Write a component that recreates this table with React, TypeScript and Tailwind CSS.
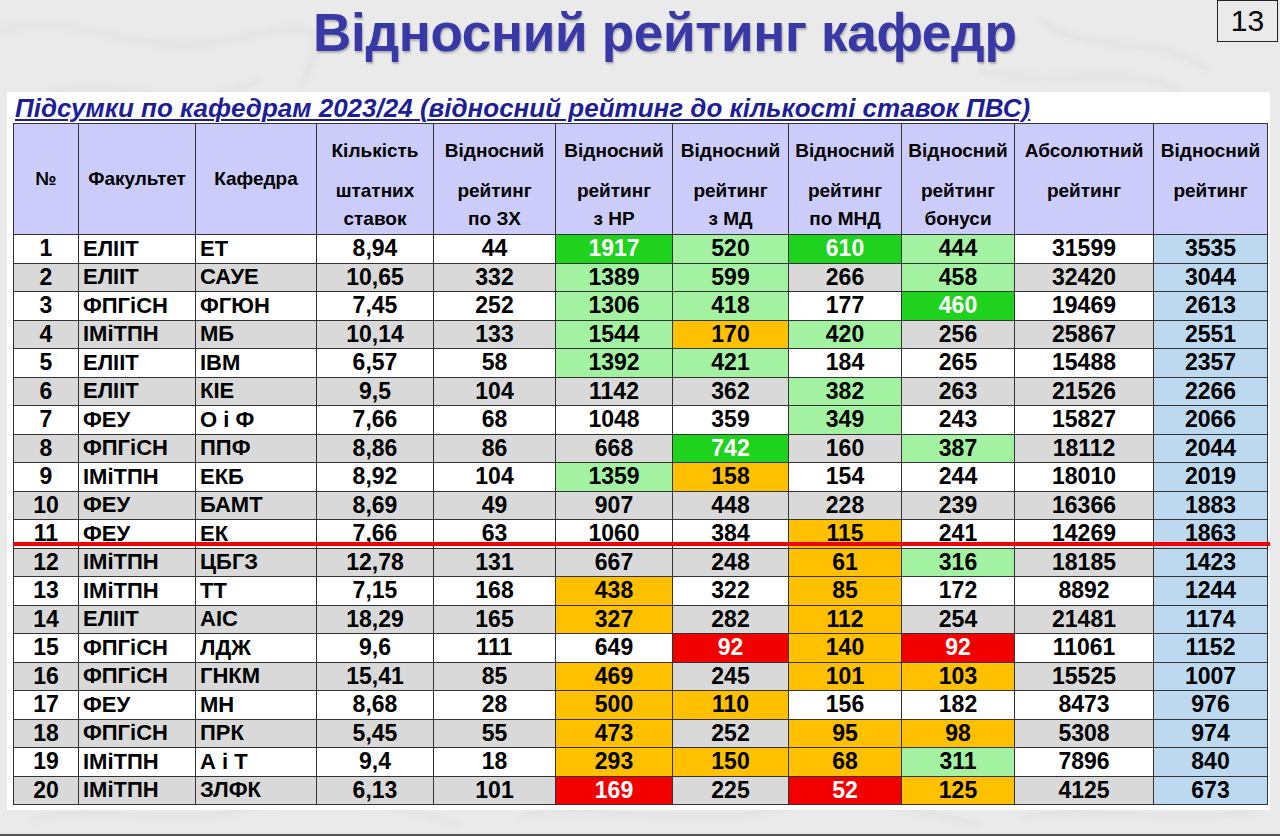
import React from 'react';

type Mark = '' | 'G' | 'g' | 'o' | 'r';

interface Row {
  n: number;
  fac: string;
  dep: string;
  staff: string;
  zh: string;
  nr: [string, Mark];
  md: [string, Mark];
  mnd: [string, Mark];
  bonus: [string, Mark];
  abs: string;
  rel: string;
}

const rows: Row[] = [
  { n: 1, fac: 'ЕЛІІТ', dep: 'ЕТ', staff: '8,94', zh: '44', nr: ['1917', 'G'], md: ['520', 'g'], mnd: ['610', 'G'], bonus: ['444', 'g'], abs: '31599', rel: '3535' },
  { n: 2, fac: 'ЕЛІІТ', dep: 'САУЕ', staff: '10,65', zh: '332', nr: ['1389', 'g'], md: ['599', 'g'], mnd: ['266', ''], bonus: ['458', 'g'], abs: '32420', rel: '3044' },
  { n: 3, fac: 'ФПГіСН', dep: 'ФГЮН', staff: '7,45', zh: '252', nr: ['1306', 'g'], md: ['418', 'g'], mnd: ['177', ''], bonus: ['460', 'G'], abs: '19469', rel: '2613' },
  { n: 4, fac: 'ІМіТПН', dep: 'МБ', staff: '10,14', zh: '133', nr: ['1544', 'g'], md: ['170', 'o'], mnd: ['420', 'g'], bonus: ['256', ''], abs: '25867', rel: '2551' },
  { n: 5, fac: 'ЕЛІІТ', dep: 'ІВМ', staff: '6,57', zh: '58', nr: ['1392', 'g'], md: ['421', 'g'], mnd: ['184', ''], bonus: ['265', ''], abs: '15488', rel: '2357' },
  { n: 6, fac: 'ЕЛІІТ', dep: 'КІЕ', staff: '9,5', zh: '104', nr: ['1142', ''], md: ['362', ''], mnd: ['382', 'g'], bonus: ['263', ''], abs: '21526', rel: '2266' },
  { n: 7, fac: 'ФЕУ', dep: 'О і Ф', staff: '7,66', zh: '68', nr: ['1048', ''], md: ['359', ''], mnd: ['349', 'g'], bonus: ['243', ''], abs: '15827', rel: '2066' },
  { n: 8, fac: 'ФПГіСН', dep: 'ППФ', staff: '8,86', zh: '86', nr: ['668', ''], md: ['742', 'G'], mnd: ['160', ''], bonus: ['387', 'g'], abs: '18112', rel: '2044' },
  { n: 9, fac: 'ІМіТПН', dep: 'ЕКБ', staff: '8,92', zh: '104', nr: ['1359', 'g'], md: ['158', 'o'], mnd: ['154', ''], bonus: ['244', ''], abs: '18010', rel: '2019' },
  { n: 10, fac: 'ФЕУ', dep: 'БАМТ', staff: '8,69', zh: '49', nr: ['907', ''], md: ['448', ''], mnd: ['228', ''], bonus: ['239', ''], abs: '16366', rel: '1883' },
  { n: 11, fac: 'ФЕУ', dep: 'ЕК', staff: '7,66', zh: '63', nr: ['1060', ''], md: ['384', ''], mnd: ['115', 'o'], bonus: ['241', ''], abs: '14269', rel: '1863' },
  { n: 12, fac: 'ІМіТПН', dep: 'ЦБГЗ', staff: '12,78', zh: '131', nr: ['667', ''], md: ['248', ''], mnd: ['61', 'o'], bonus: ['316', 'g'], abs: '18185', rel: '1423' },
  { n: 13, fac: 'ІМіТПН', dep: 'ТТ', staff: '7,15', zh: '168', nr: ['438', 'o'], md: ['322', ''], mnd: ['85', 'o'], bonus: ['172', ''], abs: '8892', rel: '1244' },
  { n: 14, fac: 'ЕЛІІТ', dep: 'АІС', staff: '18,29', zh: '165', nr: ['327', 'o'], md: ['282', ''], mnd: ['112', 'o'], bonus: ['254', ''], abs: '21481', rel: '1174' },
  { n: 15, fac: 'ФПГіСН', dep: 'ЛДЖ', staff: '9,6', zh: '111', nr: ['649', ''], md: ['92', 'r'], mnd: ['140', 'o'], bonus: ['92', 'r'], abs: '11061', rel: '1152' },
  { n: 16, fac: 'ФПГіСН', dep: 'ГНКМ', staff: '15,41', zh: '85', nr: ['469', 'o'], md: ['245', ''], mnd: ['101', 'o'], bonus: ['103', 'o'], abs: '15525', rel: '1007' },
  { n: 17, fac: 'ФЕУ', dep: 'МН', staff: '8,68', zh: '28', nr: ['500', 'o'], md: ['110', 'o'], mnd: ['156', ''], bonus: ['182', ''], abs: '8473', rel: '976' },
  { n: 18, fac: 'ФПГіСН', dep: 'ПРК', staff: '5,45', zh: '55', nr: ['473', 'o'], md: ['252', ''], mnd: ['95', 'o'], bonus: ['98', 'o'], abs: '5308', rel: '974' },
  { n: 19, fac: 'ІМіТПН', dep: 'А і Т', staff: '9,4', zh: '18', nr: ['293', 'o'], md: ['150', 'o'], mnd: ['68', 'o'], bonus: ['311', 'g'], abs: '7896', rel: '840' },
  { n: 20, fac: 'ІМіТПН', dep: 'ЗЛФК', staff: '6,13', zh: '101', nr: ['169', 'r'], md: ['225', ''], mnd: ['52', 'r'], bonus: ['125', 'o'], abs: '4125', rel: '673' },
];

const headers: string[][] = [
  ['№'],
  ['Факультет'],
  ['Кафедра'],
  ['Кількість', 'штатних', 'ставок'],
  ['Відносний', 'рейтинг', 'по ЗХ'],
  ['Відносний', 'рейтинг', 'з НР'],
  ['Відносний', 'рейтинг', 'з МД'],
  ['Відносний', 'рейтинг', 'по МНД'],
  ['Відносний', 'рейтинг', 'бонуси'],
  ['Абсолютний', 'рейтинг'],
  ['Відносний', 'рейтинг'],
];

const widths = ['w-[65px]', 'w-[117px]', 'w-[121px]', 'w-[117px]', 'w-[122px]', 'w-[117px]', 'w-[116px]', 'w-[113px]', 'w-[113px]', 'w-[139px]', 'w-[114px]'];

const markClass: Record<Exclude<Mark, ''>, string> = {
  G: 'bg-[#1ed21e] text-white',
  g: 'bg-[#a2f2a2]',
  o: 'bg-[#ffc000]',
  r: 'bg-[#f20000] text-white',
};

function HeaderCell({ lines }: { lines: string[] }) {
  if (lines.length === 1) {
    return (
      <th className="border border-[#333] bg-[#ccccfa] p-0 align-middle text-center text-[19px] font-bold">
        {lines[0]}
      </th>
    );
  }
  return (
    <th className="border border-[#333] bg-[#ccccfa] p-0 align-top text-[19px] font-bold">
      <div className="flex flex-col items-center">
        <div className="flex h-[54px] items-center">{lines[0]}</div>
        <div className="flex h-[26px] items-center">{lines[1]}</div>
        {lines[2] && <div className="flex h-[30px] items-center">{lines[2]}</div>}
      </div>
    </th>
  );
}

function Marble() {
  // faint grey veins of the slide's marble background
  return (
    <svg className="absolute inset-0 h-full w-full" viewBox="0 0 1280 836" preserveAspectRatio="none">
      <defs>
        <filter id="soft">
          <feGaussianBlur stdDeviation="3" />
        </filter>
      </defs>
      <g stroke="#d2d2d2" strokeWidth="3" fill="none" filter="url(#soft)" opacity="0.6">
        <path d="M0 30 C 80 10, 140 60, 230 40 S 330 20, 300 90" />
        <path d="M40 95 C 120 70, 170 120, 260 80" />
        <path d="M1040 20 C 1100 60, 1150 30, 1210 70" />
        <path d="M980 70 C 1060 90, 1120 60, 1180 90" />
        <path d="M30 820 C 100 800, 160 830, 240 810 S 380 800, 460 825" />
        <path d="M520 815 C 600 800, 680 830, 760 812 S 900 805, 980 825" />
        <path d="M1020 818 C 1090 800, 1160 828, 1260 810" />
      </g>
    </svg>
  );
}

export default function App() {
  return (
    <div
      className="relative h-[836px] w-[1280px] overflow-hidden bg-[#eaeaea] text-black"
      style={{ fontFamily: '"Liberation Sans", Arial, sans-serif' }}
    >
      <Marble />
      <div className="absolute inset-x-0 bottom-0 h-[2px] bg-[#555]" />

      <div className="relative flex h-[92px] items-start">
        <h1 className="ml-[313px] mt-[2px] text-[53px] font-bold leading-[62px] tracking-[-0.3px] text-[#3838a6] [text-shadow:1px_2px_2px_rgba(0,0,0,0.25)]">
          Відносний рейтинг кафедр
        </h1>
        <div className="ml-auto mr-[2px] flex h-[42px] w-[61px] items-center justify-center border border-[#222] text-[30px] leading-none">
          13
        </div>
      </div>

      <div className="relative ml-[7px] w-[1263px] bg-white pb-[5px]">
        <div className="flex h-[31px] items-end pl-[8px]">
          <span className="text-[26px] font-bold italic leading-[30px] text-[#1e1e96] underline decoration-[2px] underline-offset-[2px]">
            Підсумки по кафедрам 2023/24 (відносний рейтинг до кількості ставок ПВС)
          </span>
        </div>

        <div className="relative ml-[6px] w-[1254px]">
          <table className="w-[1254px] table-fixed border-collapse">
            <colgroup>
              {widths.map((w, i) => (
                <col key={i} className={w} />
              ))}
            </colgroup>
            <thead>
              <tr className="h-[110px]">
                {headers.map((h, i) => (
                  <HeaderCell key={i} lines={h} />
                ))}
              </tr>
            </thead>
            <tbody className="text-[23px] font-bold leading-none">
              {rows.map((r) => {
                const stripe = r.n % 2 === 0 ? 'bg-[#d9d9d9]' : 'bg-white';
                const cell = 'border border-[#333] p-0 text-center';
                const text = 'border border-[#333] p-0 pl-[4px] text-left text-[22px]';
                const marked = (v: [string, Mark]) => (
                  <td className={`${cell} ${v[1] ? markClass[v[1]] : stripe}`}>{v[0]}</td>
                );
                return (
                  <tr key={r.n} className="h-[28.5px]">
                    <td className={`${cell} ${stripe}`}>{r.n}</td>
                    <td className={`${text} ${stripe}`}>{r.fac}</td>
                    <td className={`${text} ${stripe}`}>{r.dep}</td>
                    <td className={`${cell} ${stripe}`}>{r.staff}</td>
                    <td className={`${cell} ${stripe}`}>{r.zh}</td>
                    {marked(r.nr)}
                    {marked(r.md)}
                    {marked(r.mnd)}
                    {marked(r.bonus)}
                    <td className={`${cell} ${stripe}`}>{r.abs}</td>
                    <td className={`${cell} bg-[#bdd9f0]`}>{r.rel}</td>
                  </tr>
                );
              })}
            </tbody>
          </table>
          {/* red cut-off line under row 11 */}
          <div className="absolute left-0 top-[419px] h-[4px] w-[1257px] bg-[#f00000]" />
        </div>
      </div>
    </div>
  );
}
